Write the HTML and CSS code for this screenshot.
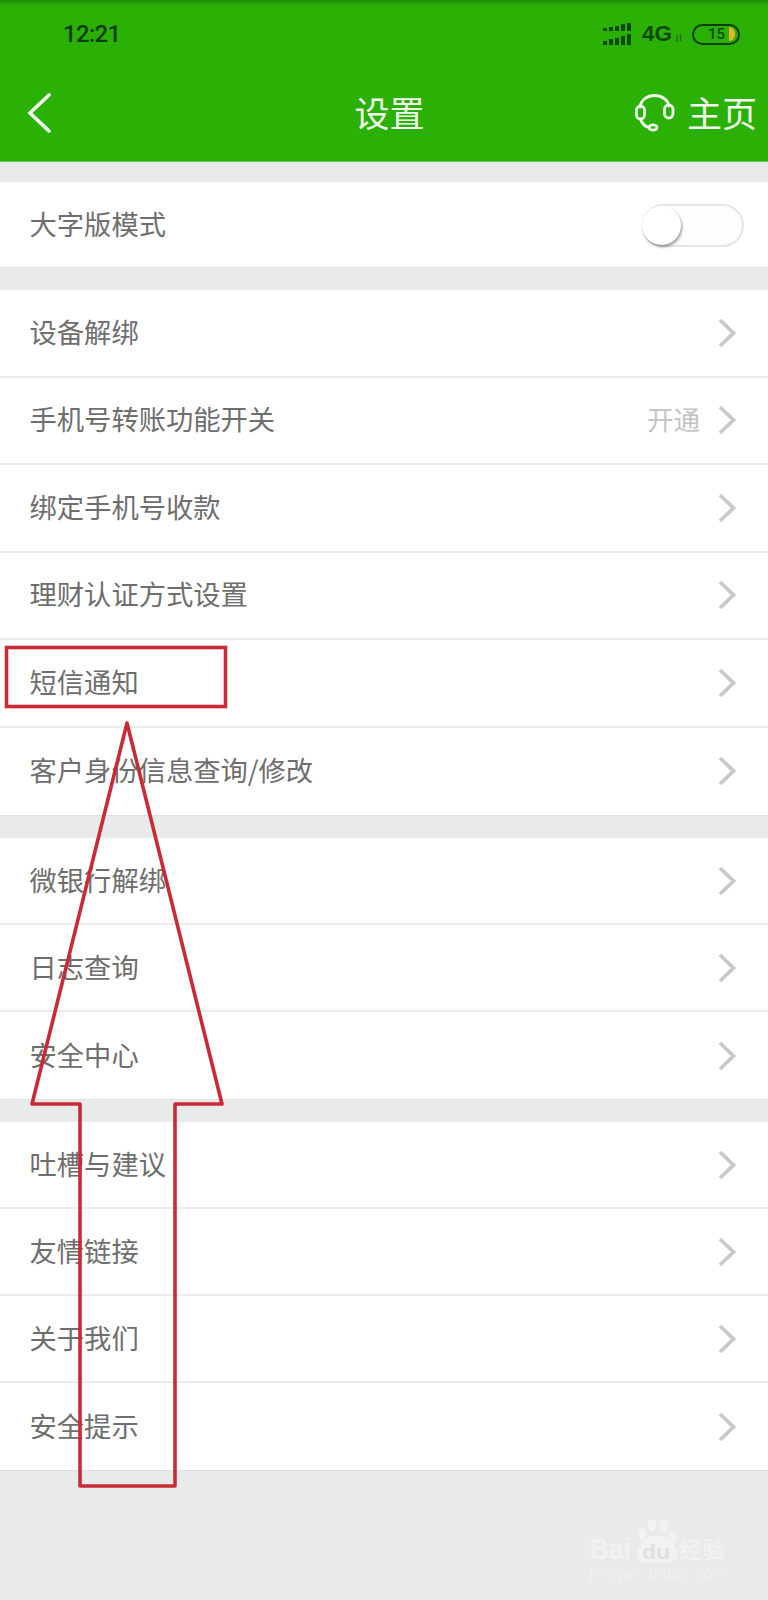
FILE: index.html
```html
<!DOCTYPE html>
<html lang="zh-CN">
<head>
<meta charset="utf-8">
<title>设置</title>
<link rel="stylesheet" href="styles.css">
</head>
<body>
<div class="page">
  <svg class="sprite" width="0" height="0" aria-hidden="true"><defs>
    <symbol id="chev" viewBox="0 0 18 30"><path d="M2 2 L15.5 15 L2 28" fill="none" stroke="#c9c9c9" stroke-width="3.8"/></symbol>
  </defs></svg>
  <header class="header">
    <div class="status">
      <span class="time">12:21</span>
      <div class="status-right">
        <svg class="signal" width="29" height="22" viewBox="0 0 29 22">
          <g fill="#0d4a0a">
            <rect x="0" y="5" width="4" height="3"/><rect x="6" y="4" width="4" height="4"/><rect x="12" y="3" width="4" height="5"/><rect x="18" y="1" width="4" height="7"/><rect x="24" y="0" width="4" height="8"/>
            <rect x="0" y="18" width="4" height="4"/><rect x="6" y="16" width="4" height="6"/><rect x="12" y="15" width="4" height="7"/><rect x="18" y="13" width="4" height="9"/><rect x="24" y="11" width="4" height="11"/>
          </g>
        </svg>
        <span class="net">4G</span>
        <svg class="updown" width="8" height="10" viewBox="0 0 8 10"><path d="M2 9V2M5.5 1v7" stroke="#1f6f10" stroke-width="1.4" fill="none"/></svg>
        <div class="battery"><span class="battery-num">15</span><span class="battery-level"></span></div>
      </div>
    </div>
    <nav class="nav">
      <svg class="back" width="24" height="40" viewBox="0 0 24 40"><path d="M22 2 L3 20 L22 38" fill="none" stroke="#f2fbee" stroke-width="3.6" stroke-linecap="round"/></svg>
      <h1 class="title">设置</h1>
      <div class="home">
        <svg class="headset" width="40" height="38" viewBox="0 0 40 38">
          <g fill="none" stroke="#eef9ea" stroke-width="2.8" stroke-linecap="round">
            <path d="M5 13C6 6 12 1.5 19.5 1.5C27 1.5 33 6 34 12"/>
            <rect x="1.5" y="12" width="8" height="13" rx="4"/>
            <rect x="29.5" y="11" width="8.5" height="13" rx="4.2"/>
            <path d="M5.5 25C7 30 10 32.5 14 33.5"/>
            <ellipse cx="18" cy="33.5" rx="4" ry="2.6"/>
          </g>
        </svg>
        <span class="home-text">主页</span>
      </div>
    </nav>
  </header>

  <section class="group first">
    <div class="row"><span class="label">大字版模式</span><span class="switch"><span class="knob"></span></span></div>
  </section>

  <section class="group wide">
    <div class="row"><span class="label">设备解绑</span><svg class="chev"><use href="#chev"/></svg></div>
    <div class="row"><span class="label">手机号转账功能开关</span><span class="value">开通</span><svg class="chev"><use href="#chev"/></svg></div>
    <div class="row"><span class="label">绑定手机号收款</span><svg class="chev"><use href="#chev"/></svg></div>
    <div class="row"><span class="label">理财认证方式设置</span><svg class="chev"><use href="#chev"/></svg></div>
    <div class="row"><span class="label">短信通知</span><svg class="chev"><use href="#chev"/></svg></div>
    <div class="row last"><span class="label">客户身份信息查询/修改</span><svg class="chev"><use href="#chev"/></svg></div>
  </section>

  <section class="group">
    <div class="row"><span class="label">微银行解绑</span><svg class="chev"><use href="#chev"/></svg></div>
    <div class="row"><span class="label">日志查询</span><svg class="chev"><use href="#chev"/></svg></div>
    <div class="row last"><span class="label">安全中心</span><svg class="chev"><use href="#chev"/></svg></div>
  </section>

  <section class="group">
    <div class="row"><span class="label">吐槽与建议</span><svg class="chev"><use href="#chev"/></svg></div>
    <div class="row"><span class="label">友情链接</span><svg class="chev"><use href="#chev"/></svg></div>
    <div class="row"><span class="label">关于我们</span><svg class="chev"><use href="#chev"/></svg></div>
    <div class="row last"><span class="label">安全提示</span><svg class="chev"><use href="#chev"/></svg></div>
  </section>

  <svg class="annotation" width="768" height="1600" viewBox="0 0 768 1600">
    <rect x="6.5" y="647.5" width="219" height="59" fill="none" stroke="#c92b36" stroke-width="3.6"/>
    <path d="M127 723 L222 1104 L175 1104 L175 1486 L80 1486 L80 1104 L32 1104 Z" fill="none" stroke="#c92b36" stroke-width="3.6" stroke-linejoin="round"/>
  </svg>

  <svg class="watermark" width="150" height="72" viewBox="0 0 150 72">
    <g class="wm-paw">
      <ellipse cx="64" cy="8" rx="4.5" ry="6.5"/>
      <ellipse cx="76" cy="9" rx="4.5" ry="6.5"/>
      <ellipse cx="54" cy="17" rx="4.5" ry="6"/>
      <ellipse cx="84" cy="20" rx="4.5" ry="6"/>
      <path d="M49 40C47 31 58 18 69 18C80 18 91 31 89 40C87 47 78 45 69 45C60 45 51 47 49 40Z"/>
    </g>
    <text class="wm-big" x="2" y="42" textLength="41" lengthAdjust="spacingAndGlyphs">Bai</text>
    <text class="wm-du" x="54" y="42" textLength="28" lengthAdjust="spacingAndGlyphs">du</text>
    <text class="wm-cn" x="91" y="41">经验</text>
    <text class="wm-url" x="1" y="62" textLength="138" lengthAdjust="spacingAndGlyphs">jingyan.baidu.com</text>
  </svg>
</div>
</body>
</html>
```

FILE: styles.css
```css
* { box-sizing: border-box; }
html, body { margin: 0; padding: 0; }
body {
  width: 768px;
  height: 1600px;
  overflow: hidden;
  background: #e9eaea;
  font-family: "Noto Sans CJK SC", "Noto Sans", sans-serif;
}
.page {
  position: relative;
  width: 768px;
  height: 1600px;
  background: #e9eaea;
}
.sprite { display: block; position: absolute; }

.header {
  height: 162px;
  background: linear-gradient(#1f8c06 0, #2bb005 6px);
  border-bottom: 1px solid #6cc757;
}
.status {
  height: 68px;
  display: flex;
  align-items: center;
  justify-content: space-between;
  padding: 0 28px 0 63px;
}
.time {
  font-family: Roboto, sans-serif;
  font-weight: 500;
  font-size: 24px;
  letter-spacing: -0.7px;
  color: #0f3d0c;
}
.status-right { display: flex; align-items: center; }
.signal { display: block; }
.net {
  margin-left: 10px;
  font-family: "Liberation Sans", sans-serif;
  font-weight: 700;
  font-size: 22.5px;
  color: #0f4a0c;
}
.updown { margin: 8px 0 0 3px; }
.battery {
  position: relative;
  width: 48px;
  height: 21px;
  margin-left: 9px;
  border: 2px solid #0f3d0c;
  border-radius: 11px;
  display: flex;
  align-items: center;
  justify-content: flex-end;
  padding-right: 3px;
  gap: 4px;
}
.battery-num {
  font-family: Roboto, sans-serif;
  font-weight: 500;
  font-size: 15px;
  line-height: 1;
  color: #0f4a0c;
}
.battery-level {
  width: 6px;
  height: 14px;
  background: #e0b62c;
  border-radius: 0 7px 7px 0;
}

.nav {
  height: 93px;
  display: grid;
  grid-template-columns: 1fr auto 1fr;
  align-items: center;
  padding: 0 11px 4px 22px;
  color: #f2fbee;
}
.back { display: block; margin-left: 5px; }
.title {
  margin: 0 0 2px;
  font-size: 35px;
  font-weight: 400;
  line-height: 1.2;
}
.home {
  display: flex;
  align-items: center;
  justify-content: flex-end;
  gap: 12px;
}
.headset { display: block; flex: none; }
.home-text { font-size: 35px; font-weight: 400; line-height: 1.2; margin-bottom: 2px; }

.group {
  margin-top: 22px;
  background: #fff;
  border-bottom: 1px solid #e0e0e0;
}
.group.first { margin-top: 20px; }
.row {
  height: 87px;
  display: flex;
  align-items: center;
  padding: 0 32px 0 29.5px;
  border-bottom: 2px solid #ececec;
}
.wide .row { height: 87.5px; }
.first .row { height: 85px; border-bottom: 0; }
.row.last { border-bottom: 0; }
.label {
  flex: 1;
  margin-bottom: 3px;
  font-size: 27.3px;
  font-weight: 400;
  color: #6e6e6e;
  line-height: 1.2;
}
.value {
  margin: 0 18px 3px 0;
  font-size: 26.5px;
  color: #c4c4c4;
  line-height: 1.2;
}
.chev { width: 18px; height: 30px; flex: none; }

.switch {
  width: 102px;
  height: 43px;
  margin: 2px -8px 0 0;
  border: 2px solid #e6e6e6;
  border-radius: 22px;
  background: #fdfdfd;
  position: relative;
}
.knob {
  position: absolute;
  left: -2px;
  top: 0;
  width: 39px;
  height: 39px;
  background: #fff;
  border-radius: 50%;
  box-shadow: 1px 2px 3px rgba(0, 0, 0, 0.4);
}

.annotation {
  position: absolute;
  left: 0;
  top: 0;
  pointer-events: none;
}
.watermark {
  position: absolute;
  left: 588px;
  top: 1517px;
}
.wm-paw { fill: #f1f2f2; }
.wm-big, .wm-du, .wm-cn, .wm-url { fill: #f1f2f2; }
.wm-big { font-family: "Liberation Sans", sans-serif; font-weight: 700; font-size: 29px; }
.wm-du { font-family: "Liberation Sans", sans-serif; font-weight: 700; font-size: 21px; fill: #dfe1e1; }
.wm-cn { font-family: "Noto Sans CJK SC", sans-serif; font-size: 23px; font-weight: 700; }
.wm-url { font-family: "Liberation Sans", sans-serif; font-size: 15px; opacity: 0.8; }
```
